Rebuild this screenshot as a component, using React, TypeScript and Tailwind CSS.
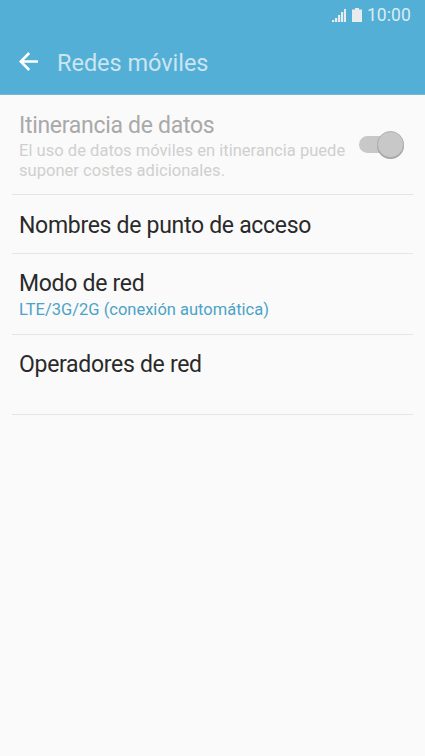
interface SettingItem {
  title: string;
  summary?: string;
  className: string;
}

const items: SettingItem[] = [
  { title: 'Nombres de punto de acceso', className: 'h-[59px] pt-[17px]' },
  { title: 'Modo de red', summary: 'LTE/3G/2G (conexión automática)', className: 'h-[81px] pt-[16px]' },
  { title: 'Operadores de red', className: 'h-[80px] pt-[16px]' },
];

const StatusBar = () => (
  <div className="flex h-[30px] items-center justify-end bg-[#53afd6] pr-[14px] text-[#e8eced]">
    <svg width="14" height="14" viewBox="0 0 14 14" fill="currentColor">
      <path d="M0 12h2.2v2H0zM3 10h2.2v4H3zM6 7h2.2v7H6zM9 4h2.2v10H9zM12 1h2v13h-2z" />
    </svg>
    <svg className="ml-[6px]" width="10" height="14" viewBox="0 0 10 14" fill="currentColor">
      <path d="M3 0h4v1.5h3V14H0V1.5h3z" />
    </svg>
    <span className="mt-[2px] ml-[5px] text-[17.5px] leading-none tracking-[0.1px] text-[#dcebf1]">10:00</span>
  </div>
);

const Toggle = () => (
  <div className="relative h-[28px] w-[45px] pt-[5px]">
    <div className="h-[17px] w-[40px] rounded-full bg-[#c8c8c8]" />
    <div className="absolute top-0 right-0 size-[27px] rounded-full border border-[#b0b0b0] bg-[#c8c8c8] shadow-[0_1px_0_#a0a0a0]" />
  </div>
);

export default function App() {
  return (
    <div className="flex h-[756px] w-[425px] flex-col overflow-hidden bg-[#fafafa] font-['Roboto',sans-serif]">
      <StatusBar />
      <header className="flex h-[65px] items-center border-b border-[#7bb9d3] bg-[#53afd6] pl-[19px] text-[#cbe5f1]">
        <svg className="-mt-[2px]" width="19" height="19" viewBox="0 0 19 19" fill="none" stroke="white" strokeWidth="2.5">
          <path d="M10.2 1L1.7 9.5L10.2 18M2 9.5H19" />
        </svg>
        <h1 className="mt-[3px] ml-[19px] text-[23.5px] leading-none tracking-[-0.03px]">Redes móviles</h1>
      </header>
      <main className="px-[12px]">
        <section className="flex h-[100px] border-b border-[#e4e4e4] pl-[7px]">
          <div className="w-[340px] pt-[17px]">
            <h2 className="text-[23px] leading-[28px] tracking-[-0.3px] text-[#a9a9a9]">Itinerancia de datos</h2>
            <p className="mt-px text-[16.5px] leading-[20px] tracking-[0.03px] whitespace-nowrap text-[#cfcfcf]">
              El uso de datos móviles en itinerancia puede
              <br />
              suponer costes adicionales.
            </p>
          </div>
          <div className="pt-[36px]">
            <Toggle />
          </div>
        </section>
        {items.map(({ title, summary, className }) => (
          <section key={title} className={`border-b border-[#e6e6e6] pl-[7px] ${className}`}>
            <h2 className="text-[23px] leading-[28px] tracking-[-0.3px] text-[#2a2a2a]">{title}</h2>
            {summary && <p className="mt-px text-[16.5px] leading-[22px] text-[#4ba3c7]">{summary}</p>}
          </section>
        ))}
      </main>
    </div>
  );
}
